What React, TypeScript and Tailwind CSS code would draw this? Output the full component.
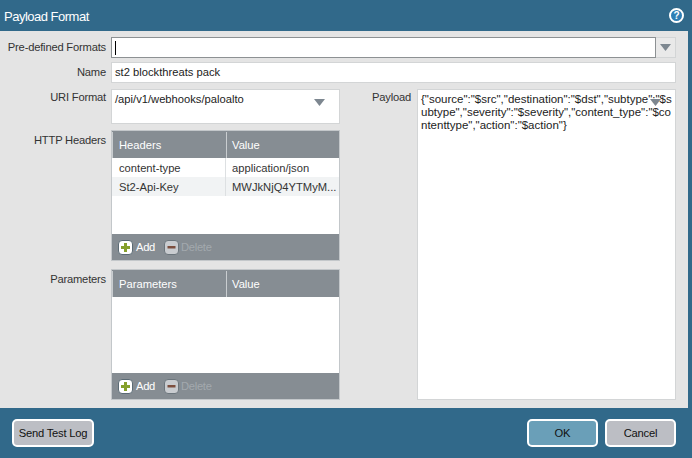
import React from 'react';

const font = { fontFamily: '"Liberation Sans", Arial, sans-serif' };

const Caret = ({ className = '' }: { className?: string }) => (
  <svg width="11" height="7" viewBox="0 0 11 7" className={className}>
    <path d="M0 0h11L5.5 7z" fill="#7d8790" />
  </svg>
);

const AddIcon = () => (
  <svg width="15" height="15" viewBox="0 0 15 15" className="shrink-0">
    <rect x="0.5" y="0.5" width="14" height="14" rx="3.5" fill="#fff" stroke="#5b6b75" />
    <path d="M6 3h3v3h3v3H9v3H6V9H3V6h3z" fill="#86a02c" />
  </svg>
);

const DeleteIcon = () => (
  <svg width="15" height="15" viewBox="0 0 15 15" className="shrink-0">
    <rect x="0.5" y="0.5" width="14" height="14" rx="3.5" fill="#c9ccd0" stroke="#6c767d" />
    <rect x="3.5" y="6" width="8" height="2.5" fill="#7d4f3f" />
  </svg>
);

const FieldLabel = ({ children, className = '' }: { children: React.ReactNode; className?: string }) => (
  <div className={`w-[106px] shrink-0 whitespace-nowrap text-right text-[11.2px] leading-[15px] tracking-[-0.2px] text-[#333] ${className}`}>{children}</div>
);

interface GridProps {
  first: string;
  rows: string[][];
  bodyHeight: string;
}

const EditGrid = ({ first, rows, bodyHeight }: GridProps) => (
  <div className="w-[229px] border border-[#c3c7ca] bg-white">
    <div className="flex h-[27px] items-center bg-[#868d93] pt-[1px] text-[11.2px] text-white">
      <div className="flex h-full w-[115px] shrink-0 items-center border-r border-l border-[#c9cdd0] pl-[6px]">{first}</div>
      <div className="pl-[5px]">Value</div>
    </div>
    <div className={bodyHeight}>
      {rows.map((row, i) => (
        <div key={row[0]} className={`flex h-[19px] items-center whitespace-nowrap text-[11.2px] text-[#333] ${i % 2 ? 'bg-[#f1f3f4]' : 'bg-white'}`}>
          <div className="flex h-full w-[114px] shrink-0 items-center border-r border-[#dde0e2] pl-[7px] pt-[1px]">{row[0]}</div>
          <div className="pl-[6px] pt-[1px]">{row[1]}</div>
        </div>
      ))}
    </div>
    <div className="flex h-[26px] items-center bg-[#868d93] pl-[6px] text-[11.2px] tracking-[-0.3px]">
      <AddIcon />
      <span className="ml-[3px] text-white">Add</span>
      <span className="ml-[9px]"><DeleteIcon /></span>
      <span className="ml-[2px] text-[#a3a9ae]">Delete</span>
    </div>
  </div>
);

const FooterButton = ({ label, className }: { label: string; className: string }) => (
  <button className={`h-[28px] rounded-[5px] border-2 border-white text-[11.2px] tracking-[-0.2px] text-[#111] ${className}`}>{label}</button>
);

export default function App() {
  return (
    <div className="flex h-[458px] w-[692px] flex-col overflow-hidden bg-[#31698a]" style={font}>
      <header className="flex h-[31px] shrink-0 items-center justify-between pl-[4px] pr-[8px]">
        <h1 className="mt-[2px] text-[13px] tracking-[-0.5px] text-white">Payload Format</h1>
        <span className="flex h-[15px] w-[15px] items-center justify-center rounded-full border-2 border-white bg-[#2f7fb5] text-[10px] font-bold leading-none text-white">?</span>
      </header>

      <main className="mr-[4px] flex h-[377px] shrink-0 flex-col bg-[#e4e4e4] pt-[6px]">
        <div className="flex h-[21px] items-center gap-[5px]">
          <FieldLabel>Pre-defined Formats</FieldLabel>
          <div className="flex h-full w-[565px]">
            <div className="flex flex-1 items-center border border-[#8d9193] bg-white pl-[3px]">
              <span className="h-[14px] w-px bg-black" />
            </div>
            <div className="flex w-[20px] items-center justify-center border border-l-0 border-[#d3d5d6] bg-[#e9e9e9]">
              <Caret />
            </div>
          </div>
        </div>

        <div className="mt-[4px] flex h-[21px] items-center gap-[5px]">
          <FieldLabel>Name</FieldLabel>
          <div className="flex h-full w-[565px] items-center border border-[#d3d5d6] bg-white pl-[3px] text-[11.2px] text-[#222]">st2 blockthreats pack</div>
        </div>

        <div className="mt-[6px] flex gap-[5px]">
          <div className="flex w-[340px] shrink-0 flex-col">
            <div className="flex gap-[5px]">
              <FieldLabel className="pt-[1px]">URI Format</FieldLabel>
              <div className="relative h-[35px] w-[229px] border border-[#d3d5d6] bg-white pl-[3px] pt-[1px] text-[11.2px] text-[#222]">
                /api/v1/webhooks/paloalto
                <Caret className="absolute right-[14px] top-[9px]" />
              </div>
            </div>
            <div className="mt-[6px] flex gap-[5px]">
              <FieldLabel className="pt-[3px]">HTTP Headers</FieldLabel>
              <EditGrid
                first="Headers"
                bodyHeight="h-[76px]"
                rows={[
                  ['content-type', 'application/json'],
                  ['St2-Api-Key', 'MWJkNjQ4YTMyM...'],
                ]}
              />
            </div>
            <div className="mt-[8px] flex gap-[5px]">
              <FieldLabel className="pt-[3px]">Parameters</FieldLabel>
              <EditGrid first="Parameters" bodyHeight="h-[76px]" rows={[]} />
            </div>
          </div>

          <div className="flex">
            <div className="w-[66px] pt-[1px] text-right text-[11.2px] leading-[15px] tracking-[-0.2px] text-[#333]">Payload</div>
            <div className="relative ml-[6px] h-[311px] w-[259px] whitespace-nowrap border border-[#d3d5d6] bg-white pl-[3px] pt-[3px] text-[11.5px] leading-[13px] text-[#222]">
              {'{"source":"$src","destination":"$dst","subtype":"$s'}
              <br />
              {'ubtype","severity":"$severity","content_type":"$co'}
              <br />
              {'ntenttype","action":"$action"}'}
              <Caret className="absolute right-[14px] top-[9px]" />
            </div>
          </div>
        </div>
      </main>

      <footer className="flex flex-1 items-center justify-between pl-[12px] pr-[16px]">
        <FooterButton label="Send Test Log" className="w-[82px] bg-[#bcbec4]" />
        <div className="flex gap-[7px]">
          <FooterButton label="OK" className="w-[71px] bg-[#6a9fb8]" />
          <FooterButton label="Cancel" className="w-[71px] bg-[#bcbec4]" />
        </div>
      </footer>
    </div>
  );
}
